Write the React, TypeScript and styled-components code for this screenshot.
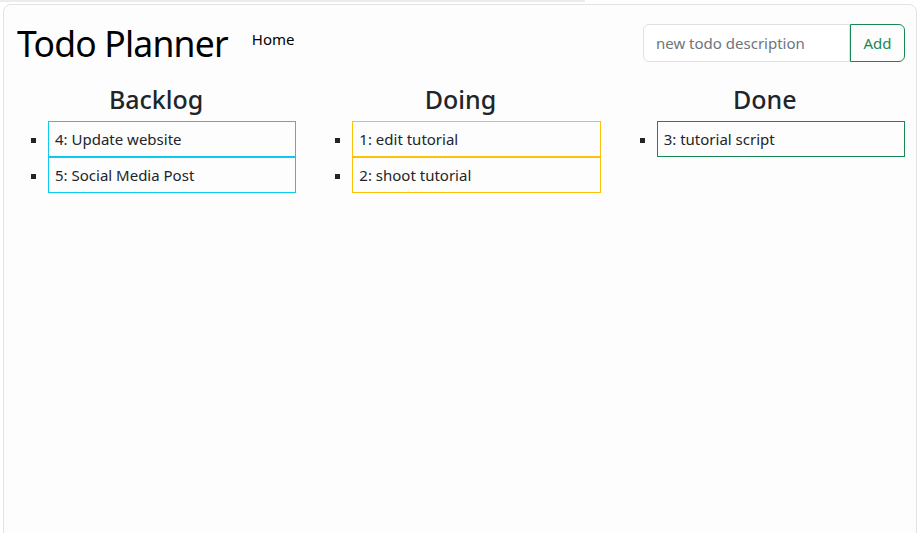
import React from "react";
import styled, { createGlobalStyle } from "styled-components";

const Global = createGlobalStyle`
  html, body { margin: 0; padding: 0; background: #ffffff; }
  body { font-family: "Noto Sans", "Open Sans", sans-serif; color: #212529; }
  * { box-sizing: border-box; }
`;

const TopLine = styled.div`
  width: 585px;
  height: 2px;
  background: #ececec;
`;

const Card = styled.div`
  margin: 2px 3px 0 3px;
  height: 540px;
  border: 1px solid #e3e3e3;
  border-radius: 8px;
  background: #fdfdfd;
  padding: 12px 11px 0 12px;
`;

const Header = styled.header`
  display: flex;
  align-items: center;
  height: 52px;
`;

const Title = styled.h1`
  margin: 0 0 0 1px;
  font-size: 35.5px;
  font-weight: 400;
  letter-spacing: -0.8px;
  line-height: 1.2;
  color: #000;
`;

const NavLink = styled.a`
  margin-left: 24px;
  align-self: flex-start;
  margin-top: 12px;
  font-size: 15px;
  color: #000;
  text-decoration: none;
`;

const Form = styled.form`
  margin-left: auto;
  display: flex;
  margin-right: 0;
`;

const Input = styled.input`
  width: 207px;
  height: 38px;
  border: 1px solid #dee2e6;
  border-radius: 6px 0 0 6px;
  padding: 0 12px;
  font-family: inherit;
  font-size: 15px;
  color: #212529;
  background: #fff;
  &::placeholder { color: #6c757d; }
`;

const Button = styled.button`
  height: 38px;
  width: 55px;
  border: 1px solid #198754;
  border-radius: 0 6px 6px 0;
  background: transparent;
  color: #198754;
  font-family: inherit;
  font-size: 15px;
`;

const Board = styled.div`
  display: grid;
  grid-template-columns: repeat(3, 1fr);
  column-gap: 24px;
  margin-top: 14px;
`;

const Column = styled.section``;

const ColumnTitle = styled.h2`
  margin: 0 0 6px 0;
  text-align: center;
  font-size: 25px;
  font-weight: 500;
  line-height: 32px;
`;

const List = styled.ul`
  margin: 0;
  padding-left: 32px;
  list-style: square;
`;

const Item = styled.li<{ $color: string }>`
  height: 36px;
  border: 1px solid ${(p) => p.$color};
  padding: 0 6px;
  font-size: 15px;
  line-height: 34px;
`;

const columns = [
  { title: "Backlog", color: "#0dcaf0", items: ["4: Update website", "5: Social Media Post"] },
  { title: "Doing", color: "#ffc107", items: ["1: edit tutorial", "2: shoot tutorial"] },
  { title: "Done", color: "#198754", items: ["3: tutorial script"] },
];

export default function App() {
  return (
    <>
      <Global />
      <TopLine />
      <Card>
        <Header>
          <Title>Todo Planner</Title>
          <NavLink href="#">Home</NavLink>
          <Form onSubmit={(e) => e.preventDefault()}>
            <Input placeholder="new todo description" />
            <Button type="submit">Add</Button>
          </Form>
        </Header>
        <Board>
          {columns.map((c) => (
            <Column key={c.title}>
              <ColumnTitle>{c.title}</ColumnTitle>
              <List>
                {c.items.map((i) => (
                  <Item key={i} $color={c.color}>{i}</Item>
                ))}
              </List>
            </Column>
          ))}
        </Board>
      </Card>
    </>
  );
}
